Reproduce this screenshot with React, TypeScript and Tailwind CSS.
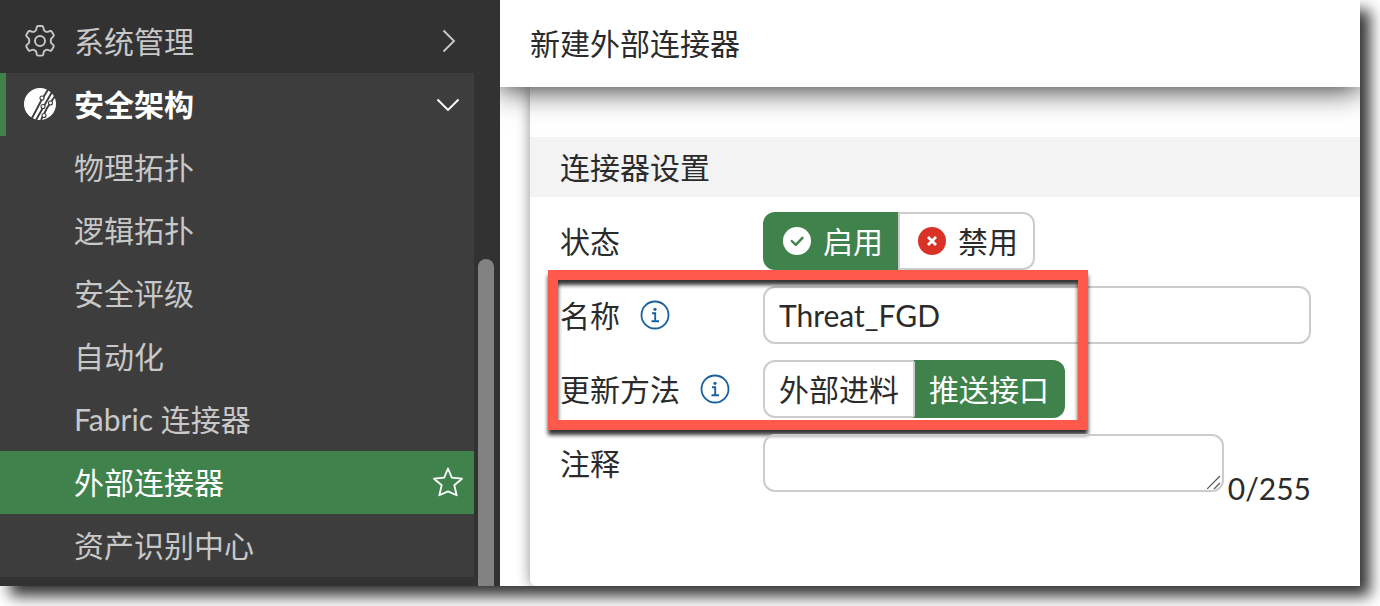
import { useState } from 'react';
import clsx from 'clsx';

const menuItems = ['物理拓扑', '逻辑拓扑', '安全评级', '自动化', 'Fabric 连接器', '外部连接器', '资产识别中心'];

function GearIcon() {
  return (
    <svg viewBox="0 0 32 32" className="size-8" fill="none" stroke="currentColor" strokeWidth="1.9" strokeLinejoin="round">
      <path d="M14 1h4q1 0 1.200 1l.6 2.600q.2 .9 1 1.400l1 .6q.8 .5 1.700 .2l2.700-.8q1-.3 1.500 .6l1.900 3.200q.5 .9-.2 1.600l-1.900 1.900q-.7 .7-.7 1.600v1.800q0 .9 .7 1.600l1.900 1.900q.7 .7 .2 1.600l-1.900 3.200q-.5 .9-1.500 .6l-2.700-.8q-.9-.3-1.700 .2l-1 .6q-.8 .5-1 1.400l-.6 2.600q-.2 1-1.200 1h-4q-1 0-1.200-1l-.6-2.600q-.2-.9-1-1.400l-1-.6q-.8-.5-1.700-.2l-2.700 .8q-1 .3-1.500-.6l-1.900-3.200q-.5-.9 .2-1.600l1.900-1.900q.7-.7 .7-1.600v-1.800q0-.9-.7-1.600l-1.900-1.900q-.7-.7-.2-1.600l1.900-3.200q.5-.9 1.500-.6l2.700 .8q.9 .3 1.700-.2l1-.6q.8-.5 1-1.400l.6-2.600q.2-1 1.200-1z" />
      <circle cx="16" cy="16" r="5" />
    </svg>
  );
}

function FabricIcon() {
  return (
    <svg viewBox="0 0 32 32" className="size-8">
      <circle cx="16" cy="16" r="16" fill="#fff" />
      <g stroke="#3d3d3d" strokeWidth="1.9" fill="none">
        <path d="M7 32L17 13 25 0" />
        <path d="M12 32l8-14 8-14" />
        <path d="M17 32l6-12 8-12" />
      </g>
      <g stroke="#3d3d3d" strokeWidth="1.1" fill="#fff">
        <circle cx="18" cy="10" r="2" />
        <circle cx="19" cy="18.500" r="2" />
        <circle cx="26.500" cy="15" r="2" />
        <circle cx="20" cy="27.500" r="2" />
      </g>
    </svg>
  );
}

function StarIcon() {
  return (
    <svg viewBox="0 0 30 30" className="w-[30px] h-[30px]" fill="none" stroke="#fff" strokeWidth="1.8" strokeLinejoin="round">
      <path d="M15 1.500l3.800 9.200 10.200 1-7.700 6.600 2.400 10L15 24.400l-8.700 3.900 2.400-10L1 11.700l10.200-1z" />
    </svg>
  );
}

function InfoIcon() {
  return (
    <svg viewBox="0 0 30 30" className="w-[30px] h-[30px] shrink-0" fill="none" stroke="#1a629f">
      <circle cx="15" cy="15" r="13.500" strokeWidth="1.800" />
      <path d="M12 13.300h3.200v8M11.500 21.300h7.500" strokeWidth="1.900" />
      <circle cx="15" cy="9.300" r="1.600" fill="#1a629f" stroke="none" />
    </svg>
  );
}

function CheckIcon() {
  return (
    <svg viewBox="0 0 28 28" className="size-7" fill="none">
      <circle cx="14" cy="14" r="14" fill="#fff" />
      <path d="M8.800 14l4 3.800 6.700-7" stroke="#40824c" strokeWidth="2.400" strokeLinecap="round" strokeLinejoin="round" />
    </svg>
  );
}

function CrossIcon() {
  return (
    <svg viewBox="0 0 28 28" className="size-7" fill="none">
      <circle cx="14" cy="14" r="14" fill="#d93327" />
      <path d="M10 10l8 8M18 10l-8 8" stroke="#fff" strokeWidth="2.800" />
    </svg>
  );
}

function Segment({ active, side, onClick, children }: { active: boolean, side: 'left' | 'right', onClick: () => void, children: React.ReactNode }) {
  return (
    <button
      type="button"
      aria-pressed={active}
      onClick={onClick}
      className={clsx(
        'flex h-[58px] items-center gap-3 border-2',
        side === 'left' ? 'rounded-l-xl' : 'rounded-r-xl -ml-0.5',
        active ? 'bg-[#40824c] border-[#40824c] text-white' : 'bg-white border-[#ccc]',
        side === 'right' && 'border-l-[#ccc]'
      )}
    >
      {children}
    </button>
  );
}

export default function App() {
  const [selected, setSelected] = useState('外部连接器');
  const [enabled, setEnabled] = useState(true);
  const [method, setMethod] = useState('push');
  const [name, setName] = useState('Threat_FGD');
  const [comment, setComment] = useState('');

  return (
    <div className="h-screen overflow-hidden bg-white pr-5 pb-5 font-['Lato','Noto_Sans_CJK_SC',sans-serif] text-3xl text-[#2b2b2b]">
      <div className="flex h-full shadow-[10px_10px_14px_rgba(0,0,0,0.8)]">
        {/* Sidebar */}
        <aside className="flex w-[500px] shrink-0 gap-1 overflow-hidden bg-[#323232] pr-1.5 text-[#c8c8c8]">
          <nav className="flex-1 pt-2.5">
            <button type="button" className="flex h-[63px] w-full items-center gap-[18px] pr-3.5 pb-0.5 pl-6">
              <GearIcon />
              <span className="flex-1 text-left">系统管理</span>
              <svg viewBox="0 0 20 24" className="h-6 w-5" fill="none" stroke="currentColor" strokeWidth="1.900">
                <path d="M3.500 1.500l10.500 10.500L3.500 22.500" />
              </svg>
            </button>
            <div className="bg-[#3d3d3d]">
              <button type="button" className="flex h-[63px] w-full items-center gap-[18px] border-l-6 border-[#40824c] pr-3.5 pb-0.5 pl-[18px] font-bold text-white">
                <FabricIcon />
                <span className="flex-1 text-left">安全架构</span>
                <svg viewBox="0 0 24 14" className="h-3.5 w-6" fill="none" stroke="currentColor" strokeWidth="1.900">
                  <path d="M1.500 2.500L12 13 22.500 2.500" />
                </svg>
              </button>
              {menuItems.map((item) => (
                <button
                  key={item}
                  type="button"
                  onClick={() => setSelected(item)}
                  className={clsx('flex h-[63px] w-full items-center justify-between pr-[11px] pb-0.5 pl-[74px]', item === selected && 'bg-[#40824c] text-white')}
                >
                  {item}
                  {item === selected && <StarIcon />}
                </button>
              ))}
            </div>
          </nav>
          <div className="mt-[259px] w-4 rounded-t-full bg-[#828282]"></div>
        </aside>

        {/* Main */}
        <main className="flex min-w-0 flex-1 flex-col overflow-hidden bg-white">
          <header className="relative z-10 flex h-[87px] shrink-0 items-center bg-white pb-0.5 pl-[30px] shadow-[0_2px_28px_rgba(0,0,0,0.85)]">
            <h1>新建外部连接器</h1>
          </header>
          <div className="flex-1 pl-[30px]">
            <section className="h-full rounded-bl-md bg-white pt-[50px] shadow-[0_0_14px_rgba(0,0,0,0.45)]">
              <h2 className="flex h-[60px] items-center bg-[#f3f3f3] pl-[30px]">连接器设置</h2>
              <form className="flex flex-col gap-4 pt-[15px] pr-[49px] pl-[30px]" onSubmit={(e) => e.preventDefault()}>
                <div className="flex items-center">
                  <span className="w-[203px] shrink-0">状态</span>
                  <div className="flex">
                    <Segment side="left" active={enabled} onClick={() => setEnabled(true)}>
                      <span className="pl-[18px]"><CheckIcon /></span>
                      <span className="pr-[15px]">启用</span>
                    </Segment>
                    <Segment side="right" active={!enabled} onClick={() => setEnabled(false)}>
                      <span className="pl-[18px]"><CrossIcon /></span>
                      <span className="pr-[15px]">禁用</span>
                    </Segment>
                  </div>
                </div>

                <div className="relative flex flex-col gap-4">
                  <div className="flex items-center">
                    <label htmlFor="name" className="flex w-[203px] shrink-0 items-center gap-5">
                      名称 <InfoIcon />
                    </label>
                    <input
                      id="name"
                      type="text"
                      value={name}
                      onChange={(e) => setName(e.target.value)}
                      className="h-[58px] min-w-0 flex-1 rounded-xl border-2 border-[#ccc] px-3.5 outline-none"
                    />
                  </div>
                  <div className="flex items-center">
                    <span className="flex w-[203px] shrink-0 items-center gap-5">
                      更新方法 <InfoIcon />
                    </span>
                    <div className="flex">
                      <Segment side="left" active={method === 'feed'} onClick={() => setMethod('feed')}>
                        <span className="px-3.5">外部进料</span>
                      </Segment>
                      <Segment side="right" active={method === 'push'} onClick={() => setMethod('push')}>
                        <span className="px-3.5">推送接口</span>
                      </Segment>
                    </div>
                  </div>
                  {/* Highlight frame */}
                  <div className="pointer-events-none absolute -top-4 -bottom-3 -left-3 w-[540px] border-10 border-[#ff594b] drop-shadow-[0_5px_2px_rgba(0,0,0,0.8)]"></div>
                </div>

                <div className="flex items-start">
                  <label htmlFor="comment" className="w-[203px] shrink-0 leading-[58px]">注释</label>
                  <div className="relative flex min-w-0 flex-1">
                    <textarea
                      id="comment"
                      maxLength={255}
                      value={comment}
                      onChange={(e) => setComment(e.target.value)}
                      className="h-[58px] w-full resize-none rounded-xl border-2 border-[#ccc] px-3.5 py-2 outline-none"
                    />
                    <svg viewBox="0 0 14 14" className="pointer-events-none absolute right-[3px] bottom-[3px] size-3.5" stroke="#555" strokeWidth="1.200">
                      <path d="M0 14L13 1M7 14l6-6" />
                    </svg>
                  </div>
                  <span className="shrink-0 pt-9 pl-1">{comment.length}/255</span>
                </div>
              </form>
            </section>
          </div>
        </main>
      </div>
    </div>
  );
}
